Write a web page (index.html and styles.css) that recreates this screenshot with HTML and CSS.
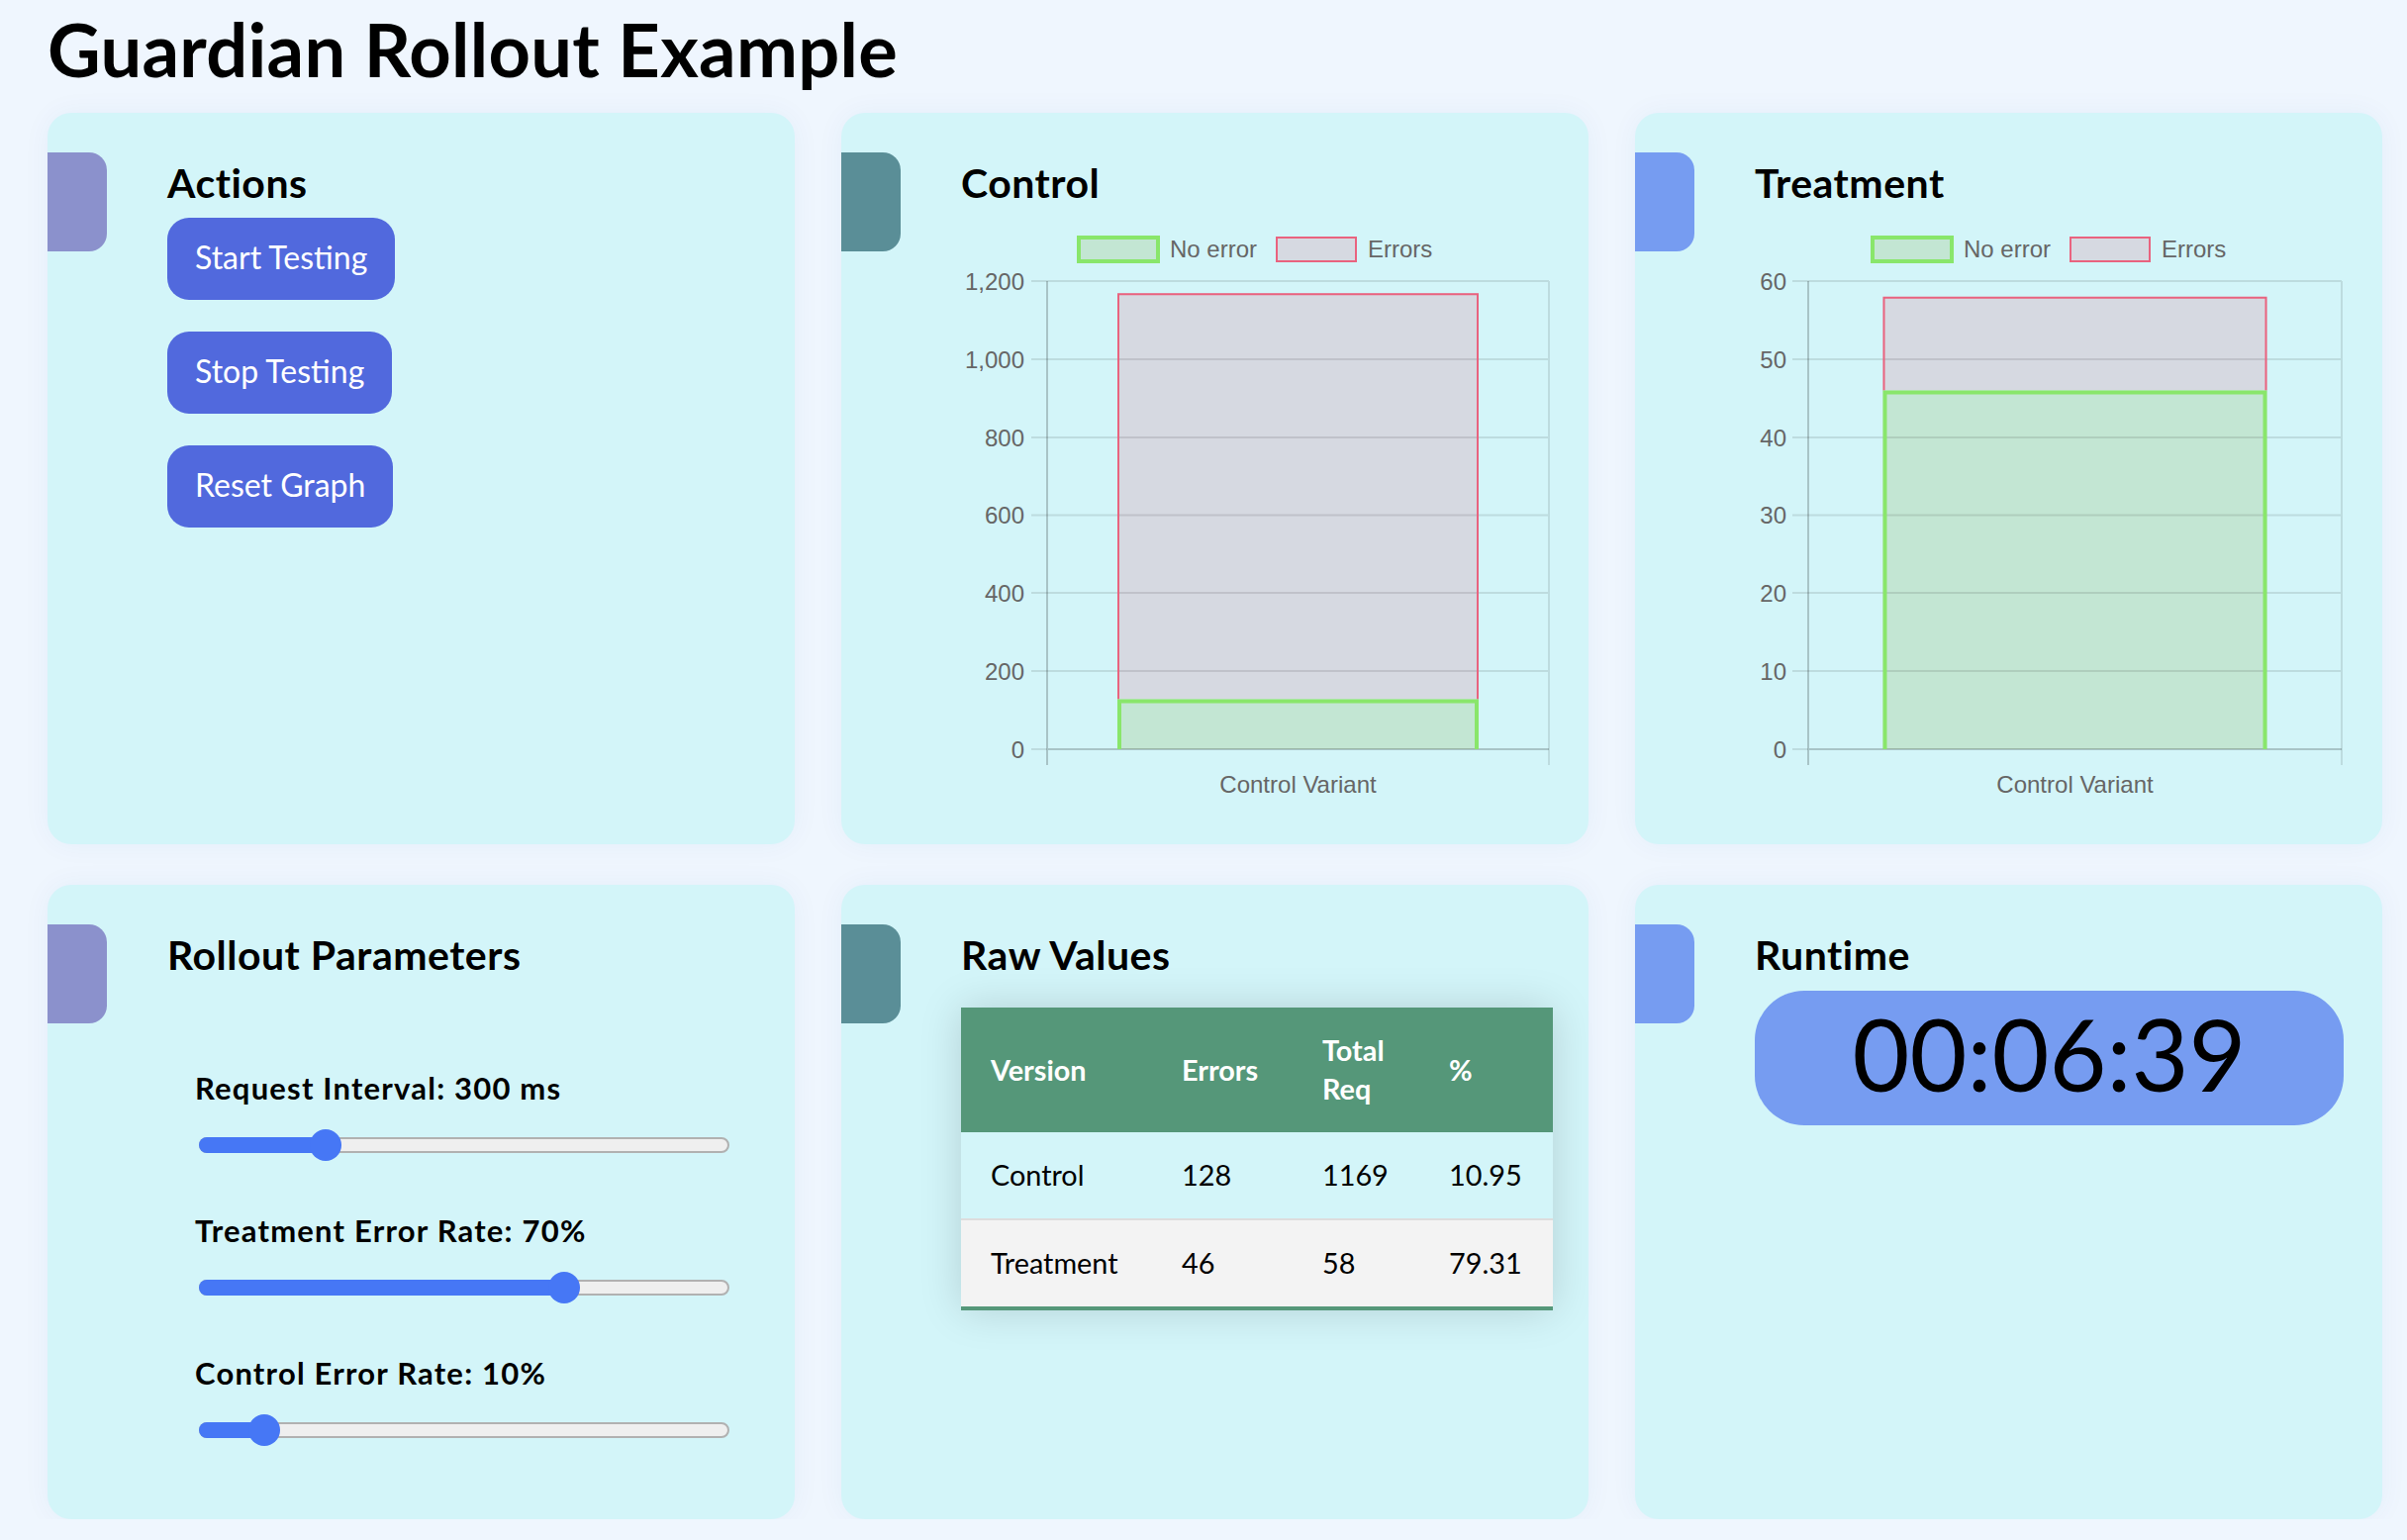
FILE: index.html
```html
<!DOCTYPE html>
<html lang="en">
<head>
<meta charset="utf-8">
<title>Guardian Rollout Example</title>
<link rel="stylesheet" href="styles.css">
</head>
<body>
<h1 class="page-title">Guardian Rollout Example</h1>
<main class="grid">
  <section class="card">
    <div class="tab tab-purple"></div>
    <div class="card-body">
      <h2 class="card-title">Actions</h2>
      <div class="actions">
        <button class="btn">Start Testing</button>
        <button class="btn">Stop Testing</button>
        <button class="btn">Reset Graph</button>
      </div>
    </div>
  </section>

  <section class="card">
    <div class="tab tab-teal"></div>
    <div class="card-body">
      <h2 class="card-title">Control</h2>
      <svg class="chart" viewBox="971 209 596 604" width="596" height="604">
        <g class="legend">
          <rect x="1090" y="240" width="80" height="24" class="fill-ok" stroke="#89e66b" stroke-width="4"/>
          <text x="1182" y="260">No error</text>
          <rect x="1290" y="240" width="80" height="24" class="fill-err" stroke="#e9637f" stroke-width="2"/>
          <text x="1382" y="260">Errors</text>
        </g>
        <rect x="1129" y="296.2" width="365" height="410.3" class="fill-err"/>
        <rect x="1129" y="706.5" width="365" height="50.5" class="fill-ok"/>
        <path class="grid-line" d="M1042 284H1565M1042 363H1565M1042 442H1565M1042 520.5H1565M1042 599H1565M1042 678H1565M1042 757H1058M1565 284V773"/>
        <path class="axis-line" d="M1058 284V773M1058 757H1565"/>
        <path d="M1130 706.5V297.2H1493V706.5" fill="none" stroke="#e9637f" stroke-width="2"/>
        <path d="M1131 757V708.5H1492V757" fill="none" stroke="#89e66b" stroke-width="4"/>
        <g class="ticks">
          <text x="1035" y="292.5">1,200</text>
          <text x="1035" y="371.5">1,000</text>
          <text x="1035" y="450.5">800</text>
          <text x="1035" y="529">600</text>
          <text x="1035" y="607.5">400</text>
          <text x="1035" y="686.5">200</text>
          <text x="1035" y="765.5">0</text>
        </g>
        <text class="xlabel" x="1311.5" y="801">Control Variant</text>
      </svg>
    </div>
  </section>

  <section class="card">
    <div class="tab tab-blue"></div>
    <div class="card-body">
      <h2 class="card-title">Treatment</h2>
      <svg class="chart" viewBox="1773 209 596 604" width="596" height="604">
        <g class="legend">
          <rect x="1892" y="240" width="80" height="24" class="fill-ok" stroke="#89e66b" stroke-width="4"/>
          <text x="1984" y="260">No error</text>
          <rect x="2092" y="240" width="80" height="24" class="fill-err" stroke="#e9637f" stroke-width="2"/>
          <text x="2184" y="260">Errors</text>
        </g>
        <rect x="1902.5" y="299.8" width="388" height="94.6" class="fill-err"/>
        <rect x="1902.5" y="394.4" width="388" height="362.6" class="fill-ok"/>
        <path class="grid-line" d="M1811 284H2366M1811 363H2366M1811 442H2366M1811 520.5H2366M1811 599H2366M1811 678H2366M1811 757H1827M2366 284V773"/>
        <path class="axis-line" d="M1827 284V773M1827 757H2366"/>
        <path d="M1903.5 394.4V300.8H2289.5V394.4" fill="none" stroke="#e9637f" stroke-width="2"/>
        <path d="M1904.5 757V396.4H2288.5V757" fill="none" stroke="#89e66b" stroke-width="4"/>
        <g class="ticks">
          <text x="1805" y="292.5">60</text>
          <text x="1805" y="371.5">50</text>
          <text x="1805" y="450.5">40</text>
          <text x="1805" y="529">30</text>
          <text x="1805" y="607.5">20</text>
          <text x="1805" y="686.5">10</text>
          <text x="1805" y="765.5">0</text>
        </g>
        <text class="xlabel" x="2096.5" y="801">Control Variant</text>
      </svg>
    </div>
  </section>

  <section class="card">
    <div class="tab tab-purple"></div>
    <div class="card-body">
      <h2 class="card-title">Rollout Parameters</h2>
      <div class="params">
        <div class="param">
          <div class="param-label">Request Interval: 300 ms</div>
          <div class="track" style="--v:0.222"><div class="track-fill"></div><div class="thumb"></div></div>
        </div>
        <div class="param">
          <div class="param-label">Treatment Error Rate: 70%</div>
          <div class="track" style="--v:0.7"><div class="track-fill"></div><div class="thumb"></div></div>
        </div>
        <div class="param">
          <div class="param-label">Control Error Rate: 10%</div>
          <div class="track" style="--v:0.1"><div class="track-fill"></div><div class="thumb"></div></div>
        </div>
      </div>
    </div>
  </section>

  <section class="card">
    <div class="tab tab-teal"></div>
    <div class="card-body">
      <h2 class="card-title">Raw Values</h2>
      <table class="raw-table">
        <colgroup>
          <col class="c-version"><col class="c-errors"><col class="c-total"><col class="c-pct">
        </colgroup>
        <thead>
          <tr><th>Version</th><th>Errors</th><th>Total Req</th><th>%</th></tr>
        </thead>
        <tbody>
          <tr><td>Control</td><td>128</td><td>1169</td><td>10.95</td></tr>
          <tr><td>Treatment</td><td>46</td><td>58</td><td>79.31</td></tr>
        </tbody>
      </table>
    </div>
  </section>

  <section class="card">
    <div class="tab tab-blue"></div>
    <div class="card-body">
      <h2 class="card-title">Runtime</h2>
      <div class="timer">00:06:39</div>
    </div>
  </section>
</main>
</body>
</html>
```
FILE: styles.css
```css
* { box-sizing: border-box; }

body {
  margin: 0;
  padding: 7px 0 0 48px;
  background: #eff6fe;
  font-family: Lato, "Open Sans", sans-serif;
  color: #000;
}

.page-title {
  margin: 0 0 21px;
  font-size: 74px;
  line-height: 86px;
  font-weight: 700;
  letter-spacing: 0.3px;
}

.grid {
  display: grid;
  grid-template-columns: repeat(3, 755px);
  grid-template-rows: 739px 641px;
  column-gap: 47px;
  row-gap: 41px;
}

.card {
  display: flex;
  align-items: flex-start;
  background: #d3f5f9;
  border-radius: 24px;
  padding: 40px 39px 40px 0;
  box-shadow: 0 0 28px rgba(40, 80, 150, 0.05);
}

.tab {
  flex: none;
  width: 60px;
  height: 100px;
  border-radius: 0 18px 18px 0;
}
.tab-purple { background: #8b91cc; }
.tab-teal { background: #5a8e97; }
.tab-blue { background: #769cf1; }

.card-body {
  flex: 1;
  min-width: 0;
  margin-left: 61px;
}

.card-title {
  margin: 0;
  padding-top: 7px;
  font-size: 41px;
  line-height: 48px;
  font-weight: 700;
  letter-spacing: 0.5px;
}

/* Actions */
.actions {
  display: flex;
  flex-direction: column;
  align-items: flex-start;
  gap: 32px;
  margin-top: 11px;
}

.btn {
  font-family: inherit;
  font-size: 32px;
  line-height: 43px;
  padding: 18px 28px 22px;
  border: none;
  border-radius: 22px;
  background: #5169dd;
  color: #fff;
}

/* Charts */
.chart {
  display: block;
  font-family: "Liberation Sans", Arial, sans-serif;
}
.chart text {
  font-size: 24px;
  fill: #666;
}
.chart .ticks text { text-anchor: end; }
.chart .xlabel { text-anchor: middle; }
.fill-ok { fill: #c3e6d3; }
.fill-err { fill: #d6d9e1; }
.grid-line {
  fill: none;
  stroke: rgba(0, 0, 0, 0.1);
  stroke-width: 2;
}
.axis-line {
  fill: none;
  stroke: rgba(0, 0, 0, 0.2);
  stroke-width: 2;
}

/* Parameters */
.params {
  padding-left: 28px;
  padding-top: 32px;
}
.param { margin-top: 60px; }
.param-label {
  font-size: 31px;
  line-height: 36px;
  font-weight: 700;
  letter-spacing: 1.2px;
  margin-bottom: 32px;
}
.track {
  position: relative;
  width: 536px;
  height: 16px;
  margin-left: 4px;
  border: 2px solid #b1b1b1;
  border-radius: 8px;
  background: #efefef;
}
.track-fill {
  position: absolute;
  left: -2px;
  top: -2px;
  bottom: -2px;
  width: calc(16px + var(--v) * 504px);
  background: #4677f5;
  border-radius: 8px;
}
.thumb {
  position: absolute;
  top: 50%;
  left: calc(var(--v) * 504px - 2px);
  width: 32px;
  height: 32px;
  margin-top: -16px;
  border-radius: 50%;
  background: #4677f5;
}

/* Table */
.raw-table {
  margin-top: 29px;
  width: 598px;
  table-layout: fixed;
  border-collapse: collapse;
  font-size: 28.8px;
  line-height: 39px;
  box-shadow: 0 0 40px rgba(0, 0, 0, 0.15);
}
.c-version { width: 193px; }
.c-errors { width: 142px; }
.c-total { width: 128px; }
.c-pct { width: 135px; }
.raw-table th,
.raw-table td {
  padding: 24px 30px;
  text-align: left;
}
.raw-table thead tr {
  background: #559779;
  color: #fff;
}
.raw-table th { font-weight: 700; }
.raw-table tbody tr { border-bottom: 2px solid #dddddd; }
.raw-table tbody tr:nth-of-type(even) { background: #f3f3f3; }
.raw-table tbody tr:last-of-type { border-bottom: 4px solid #559779; }

/* Timer */
.timer {
  margin-top: 12px;
  height: 136px;
  padding: 3px 0 13px;
  border-radius: 50px;
  background: #769cf1;
  font-size: 100px;
  line-height: 120px;
  text-align: center;
}
```
